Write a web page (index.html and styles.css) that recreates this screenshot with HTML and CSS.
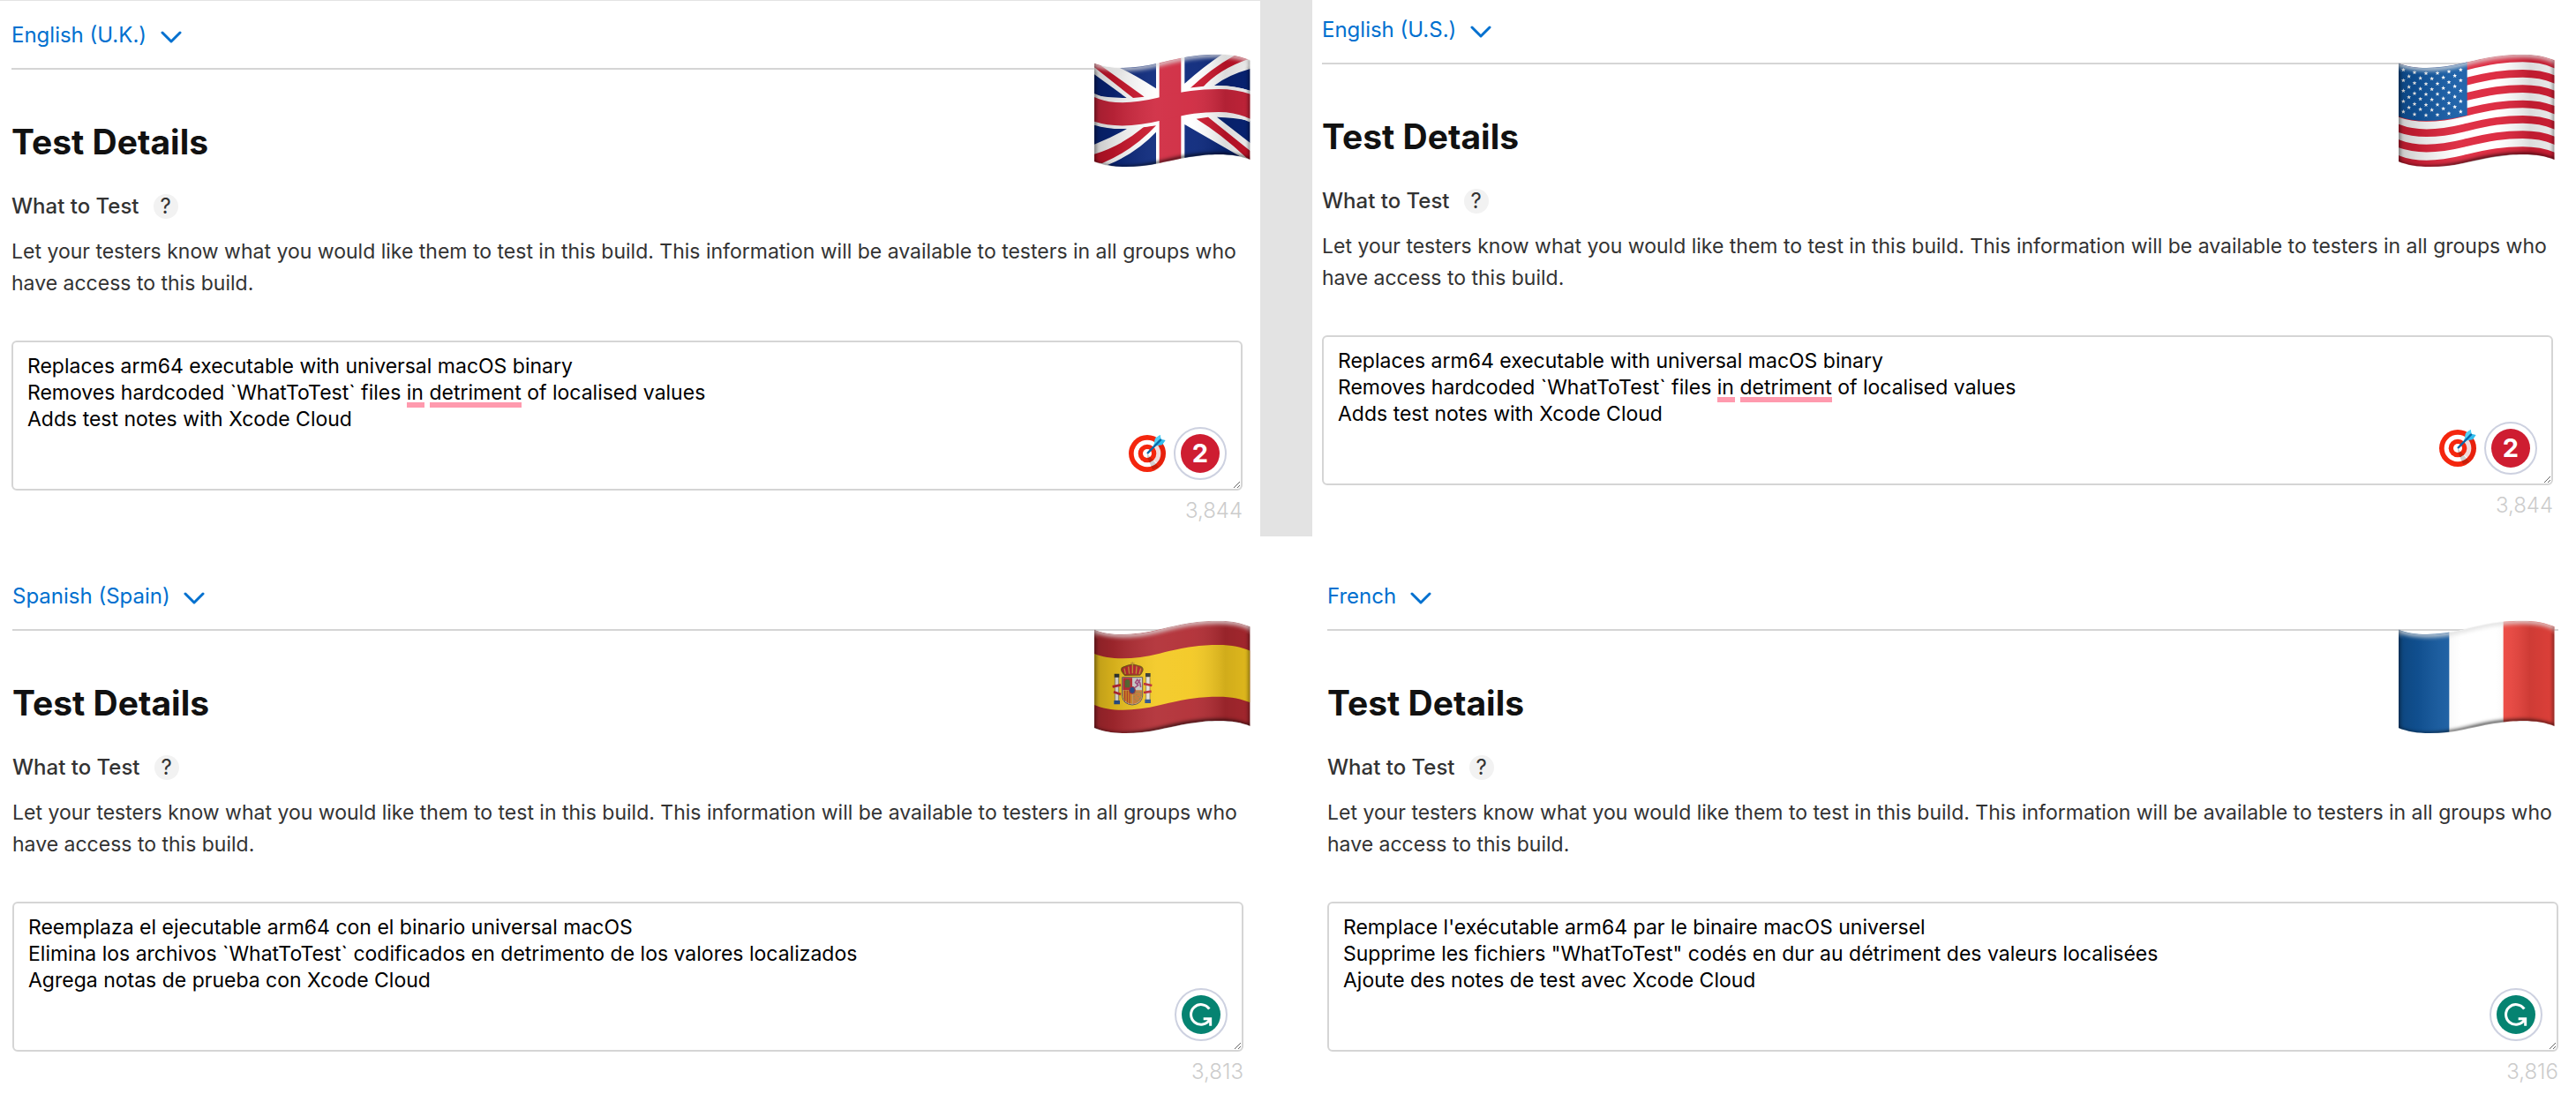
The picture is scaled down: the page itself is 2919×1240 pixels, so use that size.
FILE: index.html
```html
<!DOCTYPE html>
<html lang="en">
<head>
<meta charset="utf-8">
<meta name="viewport" content="width=device-width, initial-scale=1">
<title>Test Details</title>
<link rel="stylesheet" href="styles.css">
</head>
<body>
<svg class="defs" aria-hidden="true">
  <defs>
    <path id="flag-shape" d="M58 94C110 115 190 115 280 93C370 70 420 64 480 64C525 64 560 72 588 84V422C560 410 525 404 480 404C420 404 370 414 280 433C190 452 110 450 58 428Z"/>
    <clipPath id="flag-clip"><use href="#flag-shape"/></clipPath>
    <path id="wave" d="M18 78L58 94C110 115 190 115 280 93C370 70 420 64 480 64C525 64 560 72 588 84L628 100" fill="none"/>
    <linearGradient id="folds" x1="0" x2="1" y1="0" y2="0">
      <stop offset="0" stop-color="#000" stop-opacity=".22"/>
      <stop offset=".12" stop-color="#000" stop-opacity=".13"/>
      <stop offset=".4" stop-color="#fff" stop-opacity=".08"/>
      <stop offset=".62" stop-color="#fff" stop-opacity=".06"/>
      <stop offset=".84" stop-color="#000" stop-opacity=".14"/>
      <stop offset="1" stop-color="#000" stop-opacity=".08"/>
    </linearGradient>
    <filter id="soft" x="-10%" y="-20%" width="120%" height="140%"><feGaussianBlur stdDeviation="6"/></filter>
    <g id="shading">
      <use href="#flag-shape" fill="url(#folds)"/>
      <g filter="url(#soft)">
        <use href="#wave" stroke="#ddd" stroke-opacity=".75" stroke-width="22"/>
        <use href="#wave" y="343" stroke="#000" stroke-opacity=".75" stroke-width="16"/>
        <path d="M58 90V430M588 80V424" stroke="#000" stroke-opacity=".6" stroke-width="9"/>
      </g>
    </g>
    <path id="star" fill="#fff" d="M0-7L2-2L7-2L3 2L5 7L0 4L-5 7L-3 2L-7-2L-2-2Z"/>
    <g id="stars-5"><use href="#star"/><use href="#star" y="36"/><use href="#star" y="71"/><use href="#star" y="107"/><use href="#star" y="142"/></g>
    <g id="stars-4"><use href="#star"/><use href="#star" y="36"/><use href="#star" y="71"/><use href="#star" y="106"/></g>
    <symbol id="chevron" viewBox="0 0 24 16"><path d="M2 3L12 13L22 3" fill="none" stroke="currentColor" stroke-width="3" stroke-linecap="round" stroke-linejoin="round"/></symbol>
    <symbol id="target" viewBox="57 99 126 126">
      <circle cx="120" cy="162" r="63" fill="#f4260e"/><circle cx="120" cy="162" r="46" fill="#fff"/>
      <circle cx="120" cy="162" r="31" fill="#f4260e"/><circle cx="120" cy="162" r="15" fill="#fff"/>
      <path d="M120 162L160 208Q150 216 138 217L120 175Z" fill="#000" opacity=".18"/>
      <path d="M165 118A63 63 0 0 1 164 206L141 183A31 31 0 0 0 143 140Z" fill="#900" opacity=".14"/>
      <path d="M142 137L147 111L164 99L167 113L182 117L171 133Z" fill="#32bdee"/>
      <path d="M142 137L147 111L164 99L165 117Z" fill="#52d2f6"/>
      <path d="M122 160L165 116" stroke="#0967a8" stroke-width="7" stroke-linecap="round"/>
    </symbol>
    <symbol id="g-arrow" viewBox="117 114 132 132">
      <circle cx="183" cy="180" r="66" fill="#058371"/>
      <path d="M211 161A34 34 0 1 0 212 197M191 194H215V218" fill="none" stroke="#fff" stroke-width="9"/>
    </symbol>
  </defs>
</svg>

<main class="page">
  <div class="row row-top">
    <section class="panel panel-uk">
      <header class="panel-head">
        <select class="locale" aria-label="Language"><option>English (U.K.)</option></select>
        <svg class="chevron" aria-hidden="true"><use href="#chevron"/></svg>
      </header>
      <svg class="flag flag-left" viewBox="58 62 531 384" role="img" aria-label="United Kingdom">
        <g clip-path="url(#flag-clip)">
          <use href="#flag-shape" fill="#fff"/>
          <path fill="#08257a" d="M145 106Q210 108 268 90V180Q200 135 145 110ZM58 132L168 212Q110 212 58 203ZM365 70Q430 60 498 60Q430 105 365 163ZM588 113Q510 135 466 170Q530 168 588 187ZM58 302Q110 318 170 316Q120 345 58 370ZM268 328V440Q180 460 103 440Q200 400 268 328ZM588 290V365L475 277Q530 278 588 290ZM365 302V420Q450 402 480 408Q520 408 556 412Z"/>
          <path fill="#cb152b" d="M58 94L75 98L228 208L190 212L58 108ZM540 64L582 80Q480 115 425 178L383 180Q450 115 540 64ZM268 306L225 312Q150 375 58 403V432L85 434Q190 390 268 306ZM405 283L445 277L588 392V422L575 415Q490 335 405 283Z"/>
          <use href="#wave" y="157" stroke="#fff" stroke-width="100"/>
          <path d="M316 50V450" stroke="#fff" stroke-width="94"/>
          <path d="M316 50V450" stroke="#cf263d" stroke-width="74"/>
          <use href="#wave" y="157" stroke="#cf263d" stroke-width="78"/>
          <use href="#shading"/>
        </g>
      </svg>
      <h2 class="title">Test Details</h2>
      <div class="field-head">
        <label class="field-label" for="notes-uk">What to Test</label>
        <button class="help" type="button">?</button>
      </div>
      <p class="hint">Let your testers know what you would like them to test in this build. This information will be available to testers in all groups who have access to this build.</p>
      <div class="editor">
        <textarea class="notes" id="notes-uk" spellcheck="false">Replaces arm64 executable with universal macOS binary
Removes hardcoded `WhatToTest` files in detriment of localised values
Adds test notes with Xcode Cloud</textarea>
        <span class="mark mark-in"></span><span class="mark mark-detriment"></span>
        <div class="tools">
          <svg class="target" role="img" aria-label="Goals"><use href="#target"/></svg>
          <button class="badge" type="button"><span class="count">2</span></button>
        </div>
      </div>
      <output class="remaining" for="notes-uk">3,844</output>
    </section>

    <div class="divider"></div>

    <section class="panel panel-us">
      <header class="panel-head">
        <select class="locale" aria-label="Language"><option>English (U.S.)</option></select>
        <svg class="chevron" aria-hidden="true"><use href="#chevron"/></svg>
      </header>
      <svg class="flag flag-right" viewBox="58 62 531 384" role="img" aria-label="United States">
        <g clip-path="url(#flag-clip)">
          <use href="#flag-shape" fill="#fff"/>
          <g stroke="#dc2138" stroke-width="26">
            <use href="#wave" y="13"/><use href="#wave" y="65"/><use href="#wave" y="117"/><use href="#wave" y="169"/><use href="#wave" y="221"/><use href="#wave" y="273"/><use href="#wave" y="327"/>
          </g>
          <path fill="#1159a5" d="M58 90L280 85H291V271Q140 307 58 275Z"/>
          <use href="#stars-5" x="74" y="116"/><use href="#stars-4" x="93" y="138"/>
          <use href="#stars-5" x="112" y="125"/><use href="#stars-4" x="132" y="144"/>
          <use href="#stars-5" x="151" y="128"/><use href="#stars-4" x="171" y="146"/>
          <use href="#stars-5" x="190" y="127"/><use href="#stars-4" x="210" y="142"/>
          <use href="#stars-5" x="229" y="122"/><use href="#stars-4" x="249" y="136"/>
          <use href="#stars-5" x="269" y="116"/>
          <use href="#shading"/>
        </g>
      </svg>
      <h2 class="title">Test Details</h2>
      <div class="field-head">
        <label class="field-label" for="notes-us">What to Test</label>
        <button class="help" type="button">?</button>
      </div>
      <p class="hint">Let your testers know what you would like them to test in this build. This information will be available to testers in all groups who have access to this build.</p>
      <div class="editor">
        <textarea class="notes" id="notes-us" spellcheck="false">Replaces arm64 executable with universal macOS binary
Removes hardcoded `WhatToTest` files in detriment of localised values
Adds test notes with Xcode Cloud</textarea>
        <span class="mark mark-in"></span><span class="mark mark-detriment"></span>
        <div class="tools">
          <svg class="target" role="img" aria-label="Goals"><use href="#target"/></svg>
          <button class="badge" type="button"><span class="count">2</span></button>
        </div>
      </div>
      <output class="remaining" for="notes-us">3,844</output>
    </section>
  </div>

  <div class="row row-bottom">
    <section class="panel">
      <header class="panel-head">
        <select class="locale" aria-label="Language"><option>Spanish (Spain)</option></select>
        <svg class="chevron" aria-hidden="true"><use href="#chevron"/></svg>
      </header>
      <svg class="flag flag-left" viewBox="58 62 531 384" role="img" aria-label="Spain">
        <g clip-path="url(#flag-clip)">
          <use href="#flag-shape" fill="#b02a31"/>
          <path fill="#f3c81f" d="M58 176C110 197 190 197 280 175C370 152 420 146 480 146C525 146 560 154 588 166V342C560 330 525 322 480 322C420 322 370 328 280 351C190 373 110 373 58 350Z"/>
          <g>
            <path fill="#e9e4dc" stroke="#69604a" stroke-width="2" d="M128 254H141V336H128ZM234 254H247V336H234Z"/>
            <path fill="#30352f" d="M126 244H143V256H126ZM232 242H249V254H232Z"/>
            <path fill="#28518d" d="M125 335H145V348H125ZM230 331H250V344H230Z"/>
            <path fill="none" stroke="#bb2530" stroke-width="8" d="M120 288L148 282M124 306L148 314M254 284L226 278M252 304L226 308"/>
            <path fill="#b9212b" stroke="#765310" stroke-width="4" d="M162 249Q138 225 163 219Q187 208 211 218Q234 226 213 248Z"/>
            <path fill="none" stroke="#c29827" stroke-width="4" d="M164 245L160 226M177 244L174 220M188 243V204M200 244L202 219M211 245L216 226M181 209H195"/>
            <path fill="#ccd0cd" stroke="#65584b" stroke-width="3" d="M153 256H222V320Q219 348 187 350Q156 347 153 321Z"/>
            <path fill="#bd2732" d="M155 258H187V300H155Z"/>
            <path fill="#d38b22" d="M155 300H187V347Q158 344 155 321Z"/>
            <path stroke="#b52d27" stroke-width="3" d="M162 301V337M170 301V343M178 301V346"/>
            <path fill="#cf7b35" d="M188 300H220V320Q218 345 188 348Z"/>
            <path fill="none" stroke="#6e9857" stroke-width="3" stroke-dasharray="4 4" d="M193 306H216V325L204 339L193 328ZM195 308L215 330"/>
            <path fill="#53682d" d="M162 291V270L166 263H175L179 270V291Z"/>
            <path fill="none" stroke="#a3487c" stroke-width="5" d="M196 291L207 283L198 274L204 264L213 274L216 290M205 278L214 263"/>
            <ellipse cx="187" cy="300" rx="10" ry="12" fill="#234789" stroke="#ae2933" stroke-width="3"/>
          </g>
          <use href="#shading"/>
        </g>
      </svg>
      <h2 class="title">Test Details</h2>
      <div class="field-head">
        <label class="field-label" for="notes-es">What to Test</label>
        <button class="help" type="button">?</button>
      </div>
      <p class="hint">Let your testers know what you would like them to test in this build. This information will be available to testers in all groups who have access to this build.</p>
      <div class="editor">
        <textarea class="notes" id="notes-es" lang="es" spellcheck="false">Reemplaza el ejecutable arm64 con el binario universal macOS
Elimina los archivos `WhatToTest` codificados en detrimento de los valores localizados
Agrega notas de prueba con Xcode Cloud</textarea>
        <div class="tools">
          <button class="badge" type="button" aria-label="Check writing"><svg class="check"><use href="#g-arrow"/></svg></button>
        </div>
      </div>
      <output class="remaining" for="notes-es">3,813</output>
    </section>

    <section class="panel">
      <header class="panel-head">
        <select class="locale" aria-label="Language"><option>French</option></select>
        <svg class="chevron" aria-hidden="true"><use href="#chevron"/></svg>
      </header>
      <svg class="flag flag-right" viewBox="58 62 531 384" role="img" aria-label="France">
        <g clip-path="url(#flag-clip)">
          <use href="#flag-shape" fill="#fff"/>
          <path fill="#125aa3" d="M50 50H230V460H50Z"/>
          <path fill="#f0453e" d="M414 50H600V460H414Z"/>
          <use href="#shading"/>
        </g>
      </svg>
      <h2 class="title">Test Details</h2>
      <div class="field-head">
        <label class="field-label" for="notes-fr">What to Test</label>
        <button class="help" type="button">?</button>
      </div>
      <p class="hint">Let your testers know what you would like them to test in this build. This information will be available to testers in all groups who have access to this build.</p>
      <div class="editor">
        <textarea class="notes" id="notes-fr" lang="fr" spellcheck="false">Remplace l'exécutable arm64 par le binaire macOS universel
Supprime les fichiers "WhatToTest" codés en dur au détriment des valeurs localisées
Ajoute des notes de test avec Xcode Cloud</textarea>
        <div class="tools">
          <button class="badge" type="button" aria-label="Check writing"><svg class="check"><use href="#g-arrow"/></svg></button>
        </div>
      </div>
      <output class="remaining" for="notes-fr">3,816</output>
    </section>
  </div>
</main>
</body>
</html>
```
FILE: styles.css
```css
* {
  box-sizing: border-box;
}

body {
  margin: 0;
  background: #fff;
  color: #333;
  font: 400 24px/36px Inter, "Liberation Sans", sans-serif;
}

.defs {
  position: absolute;
  width: 0;
  height: 0;
}

.row {
  position: relative;
  display: flex;
}

.row-top {
  padding-right: 26px;
}

.row-bottom {
  gap: 95px;
  padding: 50px 20px 0 14px;
}

/* the text columns are equally wide, whatever the side padding of a panel */
.panel {
  box-sizing: content-box;
  flex: 1 1 0;
  min-width: 0;
}

.panel-uk {
  padding: 21px 20px 14px 13px;
  border-top: 1px solid #e3e3e3;
}

.panel-us {
  padding: 16px 0 20px 11px;
}

.divider {
  flex: none;
  width: 59px;
  background: #e3e3e3;
}

.panel-head {
  display: flex;
  align-items: center;
  gap: 15px;
  padding-bottom: 19px;
  border-bottom: 2px solid #d5d5d5;
  color: #0070cf;
}

.locale {
  appearance: none;
  height: 36px;
  margin: 0;
  padding: 0;
  border: 0;
  background: none;
  color: inherit;
  font: inherit;
}

.chevron {
  width: 24px;
  height: 16px;
  margin-top: 4px;
}

.flag {
  position: absolute;
  width: 177px;
  height: 128px;
}

.row-top .flag {
  top: 61px;
}

.row-bottom .flag {
  top: 95px;
}

.flag-left {
  right: calc(50% + 43px);
}

.flag-right {
  right: 24px;
}

.title {
  margin: 60px 0 37px;
  color: #111;
  font-size: 39px;
  font-weight: 700;
  line-height: 44px;
}

.field-head {
  display: flex;
  align-items: center;
  gap: 16px;
  height: 28px;
}

.field-label {
  font-weight: 500;
}

.help {
  width: 28px;
  height: 28px;
  padding: 0;
  border: 0;
  border-radius: 50%;
  background: #f2f2f2;
  color: #333;
  font: 400 24px/28px Inter, "Liberation Sans", sans-serif;
}

.hint {
  margin: 19px 0 47px;
  font-size: 23px;
}

.editor {
  position: relative;
}

.notes {
  display: block;
  width: 100%;
  height: 170px;
  margin: 0;
  padding: 12px 16px;
  border: 2px solid #d5d5d5;
  border-radius: 6px;
  background: #fff;
  color: #000;
  font: 400 23px/30px Inter, "Liberation Sans", sans-serif;
  resize: vertical;
}

.mark {
  position: absolute;
  top: 70px;
  height: 6px;
  background: #ff9aae;
}

.mark-in {
  left: 448px;
  width: 20px;
}

.mark-detriment {
  left: 474px;
  width: 104px;
}

.tools {
  position: absolute;
  right: 18px;
  bottom: 12px;
  display: flex;
  align-items: center;
  gap: 9px;
}

.target {
  width: 42px;
  height: 42px;
}

.badge {
  display: grid;
  place-items: center;
  width: 60px;
  height: 60px;
  padding: 0;
  border: 2px solid #cdd1e0;
  border-radius: 50%;
  background: #fff;
}

.count {
  width: 44px;
  height: 44px;
  border-radius: 50%;
  background: #ce1d31;
  color: #fff;
  font: 700 29px/44px Inter, "Liberation Sans", sans-serif;
}

.check {
  width: 44px;
  height: 44px;
}

.remaining {
  display: block;
  margin-top: 8px;
  color: #ccc;
  font-weight: 300;
  line-height: 30px;
  text-align: right;
}
```
